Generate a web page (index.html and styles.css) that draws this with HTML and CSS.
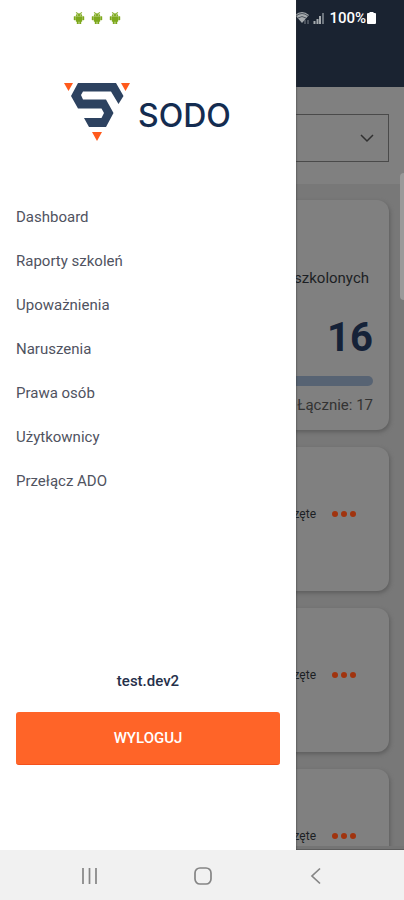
FILE: index.html
```
<!DOCTYPE html>
<html lang="pl">
<head>
<meta charset="utf-8">
<meta name="viewport" content="width=device-width, initial-scale=1">
<title>SODO</title>
<link rel="stylesheet" href="styles.css">
</head>
<body>
<div class="app">
  <main class="page">
    <header class="page-header">
      <div class="device-status">
        <svg class="wifi" width="16" height="14" viewBox="0 0 16 14" aria-hidden="true">
          <path d="M0 4Q7 -2 14 4L7 12Z" fill="#a5aaae"/>
          <path d="M1 5Q7 0 13 5M3 7Q7 4 11 7" fill="none" stroke="#4b535d"/>
          <path d="M10 13V9M13 13V9" stroke="#7c838b"/>
        </svg>
        <svg class="signal" width="11" height="12" viewBox="0 0 11 12" aria-hidden="true">
          <path d="M1.500 12V9M4.500 12V7M7 12V4" stroke="#a5aaae" stroke-width="2"/>
          <path d="M10 12V1" stroke="#6c747d" stroke-width="2"/>
        </svg>
        <span class="battery-level">100%</span>
        <svg width="9" height="12" viewBox="0 0 9 12" aria-hidden="true"><path d="M2.500 0h4v1H8q1 0 1 1v9q0 1-1 1H1q-1 0-1-1V2q0-1 1-1h1.500z" fill="#fff"/></svg>
      </div>
    </header>
    <div class="filter">
      <select class="filter-select" aria-label="ADO"><option></option></select>
      <svg class="filter-arrow" width="14" height="9" viewBox="0 0 14 9" aria-hidden="true"><path d="M1 1l6 6 6-6" fill="none" stroke="#303030" stroke-width="1.500"/></svg>
    </div>
    <div class="list">
      <section class="card summary">
        <p class="summary-title">szkolonych</p>
        <p class="summary-value">16</p>
        <div class="summary-bar"></div>
        <p class="summary-total">Łącznie: 17</p>
      </section>
      <section class="card entry">
        <span>zęte</span>
        <button class="more" type="button" aria-label="Więcej"><i></i><i></i><i></i></button>
      </section>
      <section class="card entry">
        <span>zęte</span>
        <button class="more" type="button" aria-label="Więcej"><i></i><i></i><i></i></button>
      </section>
      <section class="card entry">
        <span>zęte</span>
        <button class="more" type="button" aria-label="Więcej"><i></i><i></i><i></i></button>
      </section>
    </div>
    <div class="page-end"></div>
    <div class="scroll-thumb"></div>
  </main>

  <aside class="drawer">
    <svg class="shapes" width="0" height="0" aria-hidden="true">
      <symbol id="android" viewBox="0 0 12 12">
        <path d="M3 4Q3 1.500 6 1.500T9 4zM3 4.500h6V9.500H3zM1 4.500h1.500V8H1zM9.500 4.500H11V8H9.500zM4 9h1.500v3H4zM6.500 9H8v3H6.500zM3.200 .5l.5-.4 1 1.600-.5.3zM8.800 .5l-.5-.4-1 1.600.5.3z" fill="#7da91d" stroke="#7da91d" stroke-width=".4"/>
        <path d="M4.300 2.600h.8v.8h-.8zM6.900 2.600h.8v.8h-.8z" fill="#fff"/>
      </symbol>
    </svg>
    <div class="notices">
      <svg width="12" height="12" aria-hidden="true"><use href="#android"/></svg>
      <svg width="12" height="12" aria-hidden="true"><use href="#android"/></svg>
      <svg width="12" height="12" aria-hidden="true"><use href="#android"/></svg>
    </div>
    <div class="brand">
      <svg width="68" height="60" viewBox="0 0 68 60" aria-hidden="true">
        <path d="M15 1H53L60.500 14L55.500 22L48 9.500H20L18 13L20 17.500H43L50.500 31L43 45H26L21 36H38.500L41 31L38.500 26.500H15L8 14Z" fill="#2d4260"/>
        <path d="M1 1h9L5.500 9zM58 1h9L62.500 9zM29 50h10L34 59z" fill="#ff5a1c"/>
      </svg>
      <span class="brand-name">SODO</span>
    </div>
    <nav class="menu">
      <a href="#">Dashboard</a>
      <a href="#">Raporty szkoleń</a>
      <a href="#">Upoważnienia</a>
      <a href="#">Naruszenia</a>
      <a href="#">Prawa osób</a>
      <a href="#">Użytkownicy</a>
      <a href="#">Przełącz ADO</a>
    </nav>
    <div class="account">
      <p class="user">test.dev2</p>
      <button class="logout" type="button">WYLOGUJ</button>
    </div>
  </aside>
</div>

<footer class="system-bar">
  <button type="button" aria-label="Ostatnie"><svg width="18" height="18" viewBox="0 0 18 18"><path d="M2 1v16M8.500 1v16M15 1v16" stroke="#858585" stroke-width="1.700"/></svg></button>
  <button type="button" aria-label="Ekran główny"><svg width="18" height="18" viewBox="0 0 18 18"><rect x="1" y="1" width="16" height="16" rx="5" fill="none" stroke="#858585" stroke-width="1.700"/></svg></button>
  <button type="button" aria-label="Wstecz"><svg width="18" height="18" viewBox="0 0 18 18"><path d="M13 1.500L5 9l8 7.500" fill="none" stroke="#858585" stroke-width="1.700"/></svg></button>
</footer>
</body>
</html>
```
FILE: styles.css
```
* { box-sizing: border-box; }

body {
  margin: 0;
  height: 100vh;
  display: flex;
  flex-direction: column;
  font-family: Roboto, sans-serif;
  color: #1c1f24;
  background: #f1f1f1;
}

p { margin: 0; }

button {
  border: 0;
  padding: 0;
  background: none;
  font: inherit;
}

.app {
  flex: 1;
  min-height: 0;
  position: relative;
  overflow: hidden;
}

/* Dimmed page behind the drawer */
.page {
  height: 100%;
  display: flex;
  flex-direction: column;
  background: #787878;
}

.page-header {
  flex: none;
  height: 87px;
  padding: 10px 28px;
  background: #1a2331;
}

.device-status {
  display: flex;
  justify-content: flex-end;
  align-items: center;
  height: 16px;
}

.signal { margin: 0 5px 0 2px; }

.battery-level {
  margin-right: 1px;
  font-size: 15px;
  font-weight: 500;
  color: #fff;
}

.filter {
  flex: none;
  display: grid;
  align-items: center;
  padding: 27px 15px 22px;
  background: #808080;
}

.filter-select,
.filter-arrow { grid-area: 1 / 1; }

.filter-select {
  width: 100%;
  height: 48px;
  border: 1px solid #4a4a4a;
  border-radius: 0;
  background: transparent;
  appearance: none;
}

.filter-arrow {
  justify-self: end;
  margin-right: 15px;
  pointer-events: none;
}

.list {
  flex: 1;
  min-height: 0;
  overflow: hidden;
  display: flex;
  flex-direction: column;
  gap: 17px;
  padding: 16px 15px 0;
}

.card {
  flex: none;
  border-radius: 12px;
  background: #808080;
  box-shadow: 1px 2px 4px #5c5c5c;
}

.summary {
  height: 230px;
  padding: 68px 16px 0;
  text-align: right;
}

.summary-title {
  padding-right: 4px;
  font-size: 15px;
  line-height: 20px;
}

.summary-value {
  margin-top: 24px;
  font-size: 40px;
  font-weight: 700;
  line-height: 52px;
  color: #152238;
}

.summary-bar {
  height: 10px;
  margin-top: 12px;
  border-radius: 5px;
  background: #576373;
}

.summary-total {
  margin-top: 9px;
  font-size: 15px;
  line-height: 20px;
  color: #333;
}

.entry {
  height: 144px;
  padding: 57px 33px 0;
  display: flex;
  justify-content: flex-end;
  align-items: flex-start;
  gap: 16px;
  font-size: 12px;
  line-height: 20px;
}

.more {
  display: flex;
  align-items: center;
  gap: 3px;
  height: 20px;
}

.more i {
  width: 6px;
  height: 6px;
  border-radius: 50%;
  background: #a0340f;
}

.page-end {
  flex: none;
  height: 4px;
  background: #747474;
  border-bottom: 1px solid #5c5c5c;
}

.scroll-thumb {
  position: absolute;
  top: 173px;
  right: 0;
  width: 4px;
  height: 127px;
  border-radius: 4px 0 0 4px;
  background: #9a9a9a;
}

/* Navigation drawer */
.drawer {
  position: absolute;
  top: 0;
  bottom: 0;
  left: 0;
  width: calc(100% - 108px);
  display: flex;
  flex-direction: column;
  padding: 12px 16px 85px;
  background: #fff;
  box-shadow: 0 0 2px #333;
}

.shapes { position: absolute; }

.notices {
  display: flex;
  gap: 6px;
  padding-left: 57px;
}

.brand {
  display: flex;
  align-items: center;
  gap: 7px;
  margin-top: 58px;
  padding-left: 47px;
}

.brand-name {
  padding-top: 8px;
  font-family: Inter, sans-serif;
  font-size: 32px;
  font-weight: 500;
  line-height: 36px;
  color: #142c50;
}

.menu {
  display: flex;
  flex-direction: column;
  margin-top: 53px;
}

.menu a {
  font-size: 15px;
  line-height: 44px;
  color: #50535f;
  text-decoration: none;
}

.account { margin-top: auto; }

.user {
  margin-bottom: 21px;
  font-size: 15px;
  font-weight: 500;
  line-height: 20px;
  text-align: center;
  color: #26304a;
}

.logout {
  display: block;
  width: 100%;
  height: 53px;
  border-radius: 3px;
  background: #ff6428;
  border-bottom: 1px solid #f4511c;
  color: #fff;
  font-size: 15px;
  font-weight: 500;
}

/* Android navigation bar */
.system-bar {
  flex: none;
  height: 50px;
  display: flex;
  justify-content: space-between;
  align-items: center;
  padding: 2px 79px 0 81px;
  background: #f1f1f1;
}

.system-bar svg { display: block; }
```
